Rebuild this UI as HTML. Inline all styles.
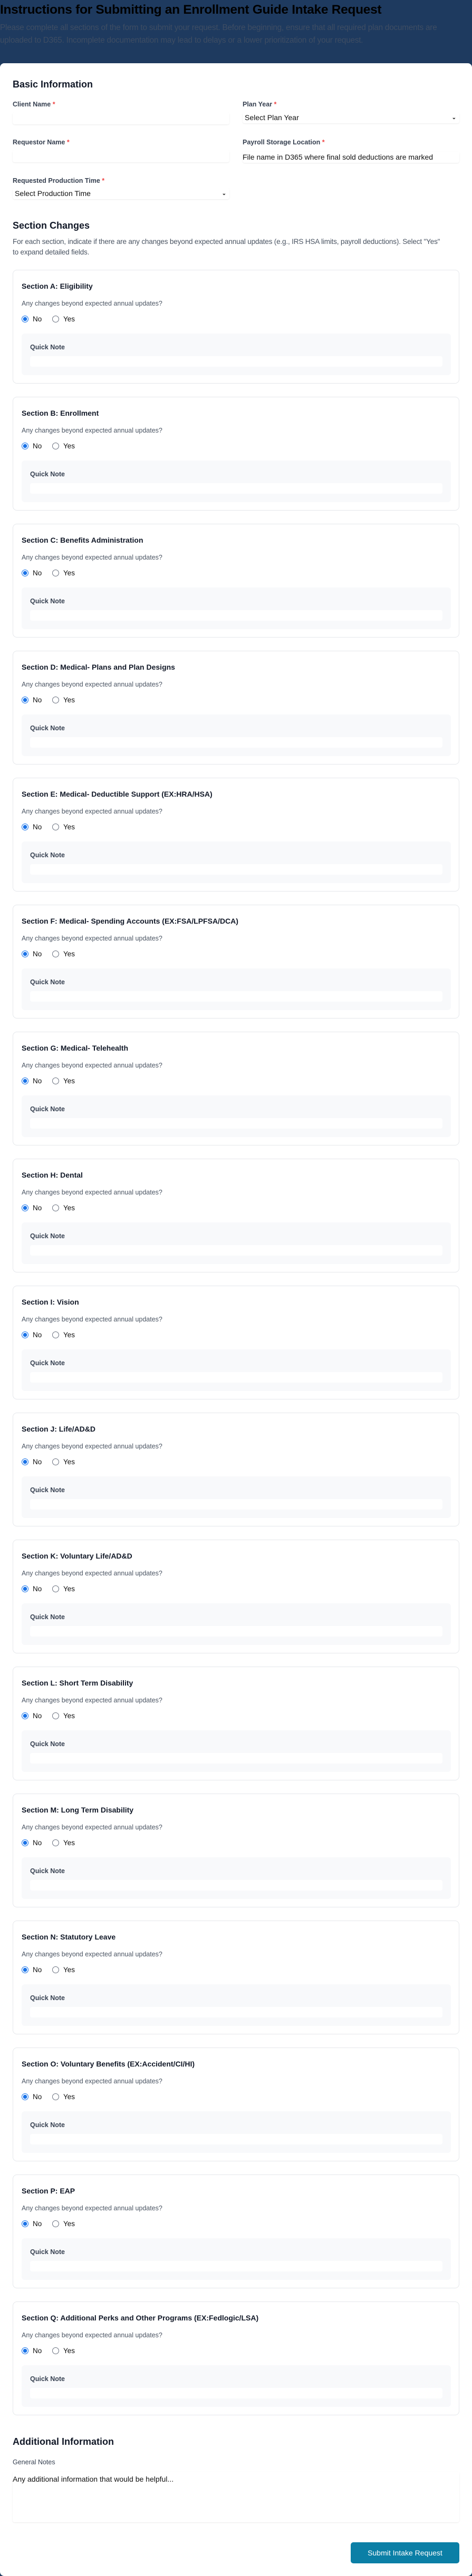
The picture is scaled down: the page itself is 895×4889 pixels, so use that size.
<!DOCTYPE html>
<html><head><meta charset="utf-8"><style>
*{box-sizing:border-box;margin:0;padding:0}
body{width:895px;height:4889px;background:#1e3a5f;font-family:"Liberation Sans",Arial,sans-serif;position:relative;overflow:hidden}
.abs{position:absolute}
h1{position:absolute;left:0;top:4px;font-size:24.5px;font-weight:bold;color:#000;letter-spacing:-0.3px;white-space:nowrap;line-height:30px}
.sub{position:absolute;left:0;top:41px;width:895px;font-size:15.3px;line-height:24px;color:#3e4d63;letter-spacing:-0.2px;white-space:nowrap}
.main{position:absolute;left:0;top:120px;width:895px;height:4769px;background:#fff;border-radius:8px}
.h2{position:absolute;left:24px;font-size:18px;font-weight:bold;color:#111827;line-height:24px}
.lbl{position:absolute;font-size:12.5px;font-weight:bold;color:#374151;line-height:16px}
.lbl b{color:#ef4444}
.inp{position:absolute;width:411px;height:23px;background:#fff;border-radius:4px;box-shadow:0 1px 2px rgba(0,0,0,.08);font-size:14px;line-height:23px;color:#111;padding-left:4px;white-space:nowrap;overflow:hidden}
.chev{position:absolute;right:6px;top:0;font-size:10px;font-weight:bold}
.desc{position:absolute;left:24px;top:449px;width:860px;font-size:13.6px;line-height:20px;color:#4b5563;letter-spacing:-0.2px;white-space:nowrap}
.card{position:absolute;left:24px;width:847px;height:216px;border:1px solid #e5e7eb;border-radius:8px;background:#fff}
.card .t{position:absolute;left:16px;top:20px;font-size:14px;font-weight:bold;color:#111827;line-height:20px}
.card .q{position:absolute;left:16px;top:55px;font-size:12.5px;color:#4b5563;line-height:16px}
.card .r{position:absolute;left:16px;top:85px;font-size:13.5px;color:#111;line-height:16px;height:16px}
.rad{position:absolute;top:1px;width:13px;height:13px;border-radius:50%;border:1px solid #6b7280;background:#fff}
.rad.on{border:1px solid #1a73e8;background:radial-gradient(circle,#1a73e8 0 3.5px,#fff 4px)}
.qb{position:absolute;left:16px;top:120px;width:814px;height:79px;background:#f8f9fb;border-radius:6px}
.qb .l{position:absolute;left:16px;top:18px;font-size:12.5px;font-weight:bold;color:#374151;line-height:16px}
.qb .i{position:absolute;left:16px;top:43px;width:782px;height:20px;background:#fff;border-radius:4px}
</style></head><body>
<h1>Instructions for Submitting an Enrollment Guide Intake Request</h1>
<div class="sub">Please complete all sections of the form to submit your request. Before beginning, ensure that all required plan documents are<br>uploaded to D365. Incomplete documentation may lead to delays or a lower prioritization of your request.</div>
<div class="main"></div>
<div class="h2" style="top:148px">Basic Information</div>
<div class="lbl" style="left:24px;top:190px">Client Name <b>*</b></div>
<div class="inp" style="left:24px;top:213px"></div>
<div class="lbl" style="left:460px;top:190px">Plan Year <b>*</b></div>
<div class="inp" style="left:460px;top:213px;height:21px;line-height:21px">Select Plan Year<span class="chev">&#8964;</span></div>
<div class="lbl" style="left:24px;top:262px">Requestor Name <b>*</b></div>
<div class="inp" style="left:24px;top:285px"></div>
<div class="lbl" style="left:460px;top:262px">Payroll Storage Location <b>*</b></div>
<div class="inp" style="left:460px;top:288px;height:21px;line-height:21px;padding-left:0">File name in D365 where final sold deductions are marked</div>
<div class="lbl" style="left:24px;top:335px">Requested Production Time <b>*</b></div>
<div class="inp" style="left:24px;top:357px;height:21px;line-height:21px">Select Production Time<span class="chev">&#8964;</span></div>
<div class="h2" style="top:416px">Section Changes</div>
<div class="desc">For each section, indicate if there are any changes beyond expected annual updates (e.g., IRS HSA limits, payroll deductions). Select "Yes"<br>to expand detailed fields.</div>
<div class="h2" style="top:4622px">Additional Information</div>
<div class="lbl" style="left:24px;top:4665px;font-weight:normal;color:#374151">General Notes</div>
<div class="abs" style="left:24px;top:4691px;width:847px;height:96px;background:#fff;border-radius:4px;box-shadow:0 1px 2px rgba(0,0,0,.08);font-size:14px;line-height:20px;color:#111;padding-top:4px">Any additional information that would be helpful...</div>
<div class="abs" style="left:665px;top:4825px;width:206px;height:40px;background:#0b7fa6;border-radius:5px;color:#fff;font-size:14px;line-height:40px;text-align:center">Submit Intake Request</div>
<div>
<div class="card" style="top:512px"><div class="t">Section A: Eligibility</div><div class="q">Any changes beyond expected annual updates?</div><div class="r"><span class="rad on" style="left:0"></span><span class="abs" style="left:21px">No</span><span class="rad" style="left:58px"></span><span class="abs" style="left:79px">Yes</span></div><div class="qb"><div class="l">Quick Note</div><div class="i"></div></div></div>
<div class="card" style="top:753px"><div class="t">Section B: Enrollment</div><div class="q">Any changes beyond expected annual updates?</div><div class="r"><span class="rad on" style="left:0"></span><span class="abs" style="left:21px">No</span><span class="rad" style="left:58px"></span><span class="abs" style="left:79px">Yes</span></div><div class="qb"><div class="l">Quick Note</div><div class="i"></div></div></div>
<div class="card" style="top:994px"><div class="t">Section C: Benefits Administration</div><div class="q">Any changes beyond expected annual updates?</div><div class="r"><span class="rad on" style="left:0"></span><span class="abs" style="left:21px">No</span><span class="rad" style="left:58px"></span><span class="abs" style="left:79px">Yes</span></div><div class="qb"><div class="l">Quick Note</div><div class="i"></div></div></div>
<div class="card" style="top:1235px"><div class="t">Section D: Medical- Plans and Plan Designs</div><div class="q">Any changes beyond expected annual updates?</div><div class="r"><span class="rad on" style="left:0"></span><span class="abs" style="left:21px">No</span><span class="rad" style="left:58px"></span><span class="abs" style="left:79px">Yes</span></div><div class="qb"><div class="l">Quick Note</div><div class="i"></div></div></div>
<div class="card" style="top:1476px"><div class="t">Section E: Medical- Deductible Support (EX:HRA/HSA)</div><div class="q">Any changes beyond expected annual updates?</div><div class="r"><span class="rad on" style="left:0"></span><span class="abs" style="left:21px">No</span><span class="rad" style="left:58px"></span><span class="abs" style="left:79px">Yes</span></div><div class="qb"><div class="l">Quick Note</div><div class="i"></div></div></div>
<div class="card" style="top:1717px"><div class="t">Section F: Medical- Spending Accounts (EX:FSA/LPFSA/DCA)</div><div class="q">Any changes beyond expected annual updates?</div><div class="r"><span class="rad on" style="left:0"></span><span class="abs" style="left:21px">No</span><span class="rad" style="left:58px"></span><span class="abs" style="left:79px">Yes</span></div><div class="qb"><div class="l">Quick Note</div><div class="i"></div></div></div>
<div class="card" style="top:1958px"><div class="t">Section G: Medical- Telehealth</div><div class="q">Any changes beyond expected annual updates?</div><div class="r"><span class="rad on" style="left:0"></span><span class="abs" style="left:21px">No</span><span class="rad" style="left:58px"></span><span class="abs" style="left:79px">Yes</span></div><div class="qb"><div class="l">Quick Note</div><div class="i"></div></div></div>
<div class="card" style="top:2199px"><div class="t">Section H: Dental</div><div class="q">Any changes beyond expected annual updates?</div><div class="r"><span class="rad on" style="left:0"></span><span class="abs" style="left:21px">No</span><span class="rad" style="left:58px"></span><span class="abs" style="left:79px">Yes</span></div><div class="qb"><div class="l">Quick Note</div><div class="i"></div></div></div>
<div class="card" style="top:2440px"><div class="t">Section I: Vision</div><div class="q">Any changes beyond expected annual updates?</div><div class="r"><span class="rad on" style="left:0"></span><span class="abs" style="left:21px">No</span><span class="rad" style="left:58px"></span><span class="abs" style="left:79px">Yes</span></div><div class="qb"><div class="l">Quick Note</div><div class="i"></div></div></div>
<div class="card" style="top:2681px"><div class="t">Section J: Life/AD&amp;D</div><div class="q">Any changes beyond expected annual updates?</div><div class="r"><span class="rad on" style="left:0"></span><span class="abs" style="left:21px">No</span><span class="rad" style="left:58px"></span><span class="abs" style="left:79px">Yes</span></div><div class="qb"><div class="l">Quick Note</div><div class="i"></div></div></div>
<div class="card" style="top:2922px"><div class="t">Section K: Voluntary Life/AD&amp;D</div><div class="q">Any changes beyond expected annual updates?</div><div class="r"><span class="rad on" style="left:0"></span><span class="abs" style="left:21px">No</span><span class="rad" style="left:58px"></span><span class="abs" style="left:79px">Yes</span></div><div class="qb"><div class="l">Quick Note</div><div class="i"></div></div></div>
<div class="card" style="top:3163px"><div class="t">Section L: Short Term Disability</div><div class="q">Any changes beyond expected annual updates?</div><div class="r"><span class="rad on" style="left:0"></span><span class="abs" style="left:21px">No</span><span class="rad" style="left:58px"></span><span class="abs" style="left:79px">Yes</span></div><div class="qb"><div class="l">Quick Note</div><div class="i"></div></div></div>
<div class="card" style="top:3404px"><div class="t">Section M: Long Term Disability</div><div class="q">Any changes beyond expected annual updates?</div><div class="r"><span class="rad on" style="left:0"></span><span class="abs" style="left:21px">No</span><span class="rad" style="left:58px"></span><span class="abs" style="left:79px">Yes</span></div><div class="qb"><div class="l">Quick Note</div><div class="i"></div></div></div>
<div class="card" style="top:3645px"><div class="t">Section N: Statutory Leave</div><div class="q">Any changes beyond expected annual updates?</div><div class="r"><span class="rad on" style="left:0"></span><span class="abs" style="left:21px">No</span><span class="rad" style="left:58px"></span><span class="abs" style="left:79px">Yes</span></div><div class="qb"><div class="l">Quick Note</div><div class="i"></div></div></div>
<div class="card" style="top:3886px"><div class="t">Section O: Voluntary Benefits (EX:Accident/CI/HI)</div><div class="q">Any changes beyond expected annual updates?</div><div class="r"><span class="rad on" style="left:0"></span><span class="abs" style="left:21px">No</span><span class="rad" style="left:58px"></span><span class="abs" style="left:79px">Yes</span></div><div class="qb"><div class="l">Quick Note</div><div class="i"></div></div></div>
<div class="card" style="top:4127px"><div class="t">Section P: EAP</div><div class="q">Any changes beyond expected annual updates?</div><div class="r"><span class="rad on" style="left:0"></span><span class="abs" style="left:21px">No</span><span class="rad" style="left:58px"></span><span class="abs" style="left:79px">Yes</span></div><div class="qb"><div class="l">Quick Note</div><div class="i"></div></div></div>
<div class="card" style="top:4368px"><div class="t">Section Q: Additional Perks and Other Programs (EX:Fedlogic/LSA)</div><div class="q">Any changes beyond expected annual updates?</div><div class="r"><span class="rad on" style="left:0"></span><span class="abs" style="left:21px">No</span><span class="rad" style="left:58px"></span><span class="abs" style="left:79px">Yes</span></div><div class="qb"><div class="l">Quick Note</div><div class="i"></div></div></div>
</div>
</body></html>
